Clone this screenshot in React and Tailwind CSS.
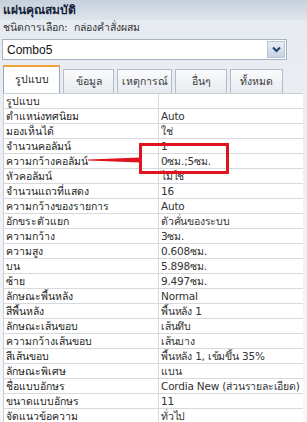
import { useState } from "react";

const rows = [
  ["รูปแบบ", ""],
  ["ตำแหน่งทศนิยม", "Auto"],
  ["มองเห็นได้", "ใช่"],
  ["จำนวนคอลัมน์", "1"],
  ["ความกว้างคอลัมน์", "0ซม.;5ซม."],
  ["หัวคอลัมน์", "ไม่ใช่"],
  ["จำนวนแถวที่แสดง", "16"],
  ["ความกว้างของรายการ", "Auto"],
  ["อักขระตัวแยก", "ตัวคั่นของระบบ"],
  ["ความกว้าง", "3ซม."],
  ["ความสูง", "0.608ซม."],
  ["บน", "5.898ซม."],
  ["ซ้าย", "9.497ซม."],
  ["ลักษณะพื้นหลัง", "Normal"],
  ["สีพื้นหลัง", "พื้นหลัง 1"],
  ["ลักษณะเส้นขอบ", "เส้นทึบ"],
  ["ความกว้างเส้นขอบ", "เส้นบาง"],
  ["สีเส้นขอบ", "พื้นหลัง 1, เข้มขึ้น 35%"],
  ["ลักษณะพิเศษ", "แบน"],
  ["ชื่อแบบอักษร", "Cordia New (ส่วนรายละเอียด)"],
  ["ขนาดแบบอักษร", "11"],
  ["จัดแนวข้อความ", "ทั่วไป"],
];

const tabs = [
  { label: "รูปแบบ", w: "w-[57px]" },
  { label: "ข้อมูล", w: "w-[51px]" },
  { label: "เหตุการณ์", w: "w-[55px]" },
  { label: "อื่นๆ", w: "w-[52px]" },
  { label: "ทั้งหมด", w: "w-[53px]" },
];

const ChevronDown = () => (
  <svg width="9" height="7" viewBox="0 0 9 7">
    <path d="M1 1.5 L4.5 5 L8 1.5" fill="none" stroke="#1f3f73" strokeWidth="2" />
  </svg>
);

const PropertySheet = () => {
  const [active, setActive] = useState(0);

  return (
    <div className="w-[307px] h-[422px] overflow-hidden bg-gradient-to-b from-[#e6ebf1] to-[#f6f8fa] font-['Tahoma','DejaVu_Sans',sans-serif] text-[#1e1e1e]">
      {/* title */}
      <div className="h-[20px] bg-gradient-to-b from-[#c6d0dc] to-[#dfe5ec] pl-[3px] flex items-center text-[12px] font-bold text-[#15243a]">
        แผ่นคุณสมบัติ
      </div>
      <div className="h-[16px] pl-[3px] flex items-center text-[10.5px] text-[#333]">
        ชนิดการเลือก:&nbsp; กล่องคำสั่งผสม
      </div>

      {/* combo */}
      <div className="pl-[2px] pt-[3px]">
        <div className="w-[285px] h-[21px] bg-white border border-[#a7b2c0] flex items-center justify-between">
          <span className="pl-[4px] text-[12px] text-[#111] font-['Liberation_Sans',sans-serif]">Combo5</span>
          <div className="w-[18px] h-[17px] mr-[1px] bg-gradient-to-b from-[#e9eef5] to-[#c7d3e3] border border-[#b9c6d8] flex items-center justify-center">
            <ChevronDown />
          </div>
        </div>
      </div>

      {/* tabs */}
      <div className="flex items-end gap-[3px] pl-[3px] mt-[4px] h-[29px]">
        {tabs.map((t, i) => (
          <div
            key={t.label}
            onClick={() => setActive(i)}
            className={
              i === active
                ? `${t.w} h-[28px] bg-white border border-b-0 border-[#9aa7b7] border-t-2 border-t-[#f1a13a] flex items-center justify-center text-[10.5px] cursor-pointer`
                : `${t.w} h-[24px] bg-gradient-to-b from-[#fbfcfd] to-[#e5e9ee] border border-b-0 border-[#b4bdc9] flex items-center justify-center text-[10.5px] text-[#3a3a3a] cursor-pointer`
            }
          >
            {t.label}
          </div>
        ))}
      </div>

      {/* grid */}
      <div className="ml-[3px] w-[300px] bg-white border-t border-l border-[#c9cfd6]">
        {rows.map(([label, value]) => (
          <div key={label} className="flex h-[15px] border-b border-[#d6d9dd] text-[10.5px] leading-[14px]">
            <div className="w-[155px] pl-[2px] border-r border-[#d6d9dd] whitespace-nowrap overflow-hidden">
              {label}
            </div>
            <div className="flex-1 pl-[2px] whitespace-nowrap overflow-hidden text-[#333] tracking-[-0.2px]">
              {value}
            </div>
          </div>
        ))}
      </div>

      {/* red callout */}
      <div className="absolute left-[139px] top-[143px] w-[90px] h-[31px] border-[3px] border-[#e0131f]" />
      <svg className="absolute left-[88px] top-[155px]" width="53" height="10" viewBox="0 0 53 10">
        <polygon points="0,4.5 52,2.5 52,7.5 0,5.5" fill="#e0131f" />
      </svg>
    </div>
  );
};

export default function App() {
  return (
    <div className="relative">
      <PropertySheet />
    </div>
  );
}
